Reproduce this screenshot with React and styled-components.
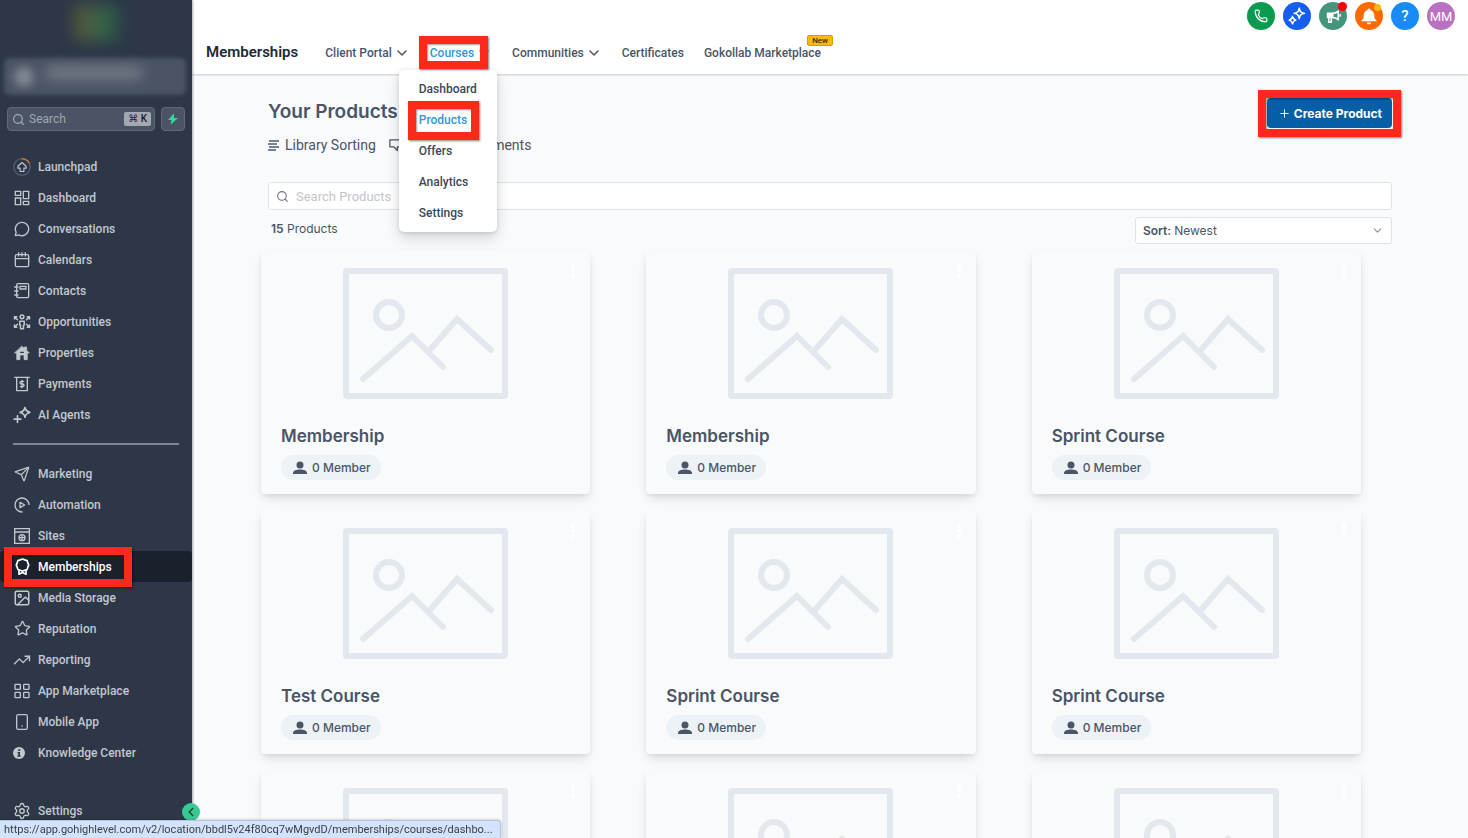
import styled, { createGlobalStyle, css } from 'styled-components';
import {
  ChevronDown,
  ChevronLeft,
  Image,
  MessageCircle,
  Phone,
  Search,
  Send,
  Settings,
  Star,
  TrendingUp,
} from 'lucide-react';

const Icon = ({ size = 16, width = 2, children }) => (
  <svg
    width={size}
    height={size}
    viewBox="0 0 24 24"
    fill="none"
    stroke="currentColor"
    strokeWidth={width}
    strokeLinecap="round"
    strokeLinejoin="round"
    aria-hidden="true"
  >
    {children}
  </svg>
);

const LaunchpadIcon = () => (
  <Icon size={18} width={1.5}>
    <circle cx="12" cy="12" r="11" stroke="#5b6678" />
    <path d="M12 1a11 11 0 0 1 9.5 5.5" stroke="#c8743f" strokeWidth="2" />
    <path d="M12 6l5.5 5v2.500h-3V18h-5v-4.500h-3V11z" />
  </Icon>
);

const DashboardIcon = () => (
  <Icon width={2}>
    <path d="M2 2h8v6H2zM14 2h8v11h-8zM2 12h8v10H2zM14 17h8v5h-8z" strokeLinejoin="miter" />
  </Icon>
);

const CalendarIcon = () => (
  <Icon width={2}>
    <rect x="2" y="4" width="20" height="18" rx="2" />
    <path d="M2 10h20M7 1v5M12 1v5M17 1v5" />
  </Icon>
);

const ContactsIcon = () => (
  <Icon width={2}>
    <rect x="4" y="1" width="18" height="21" rx="2" />
    <path d="M9 5h9v4H9zM1 6h5M1 12h5M1 18h5" />
  </Icon>
);

const OpportunitiesIcon = () => (
  <Icon size={18} width={2}>
    <circle cx="12" cy="5" r="2.500" />
    <path d="M9 11h6v5h-1v5h-4v-5H9z" />
    <path d="M2 8V5h3M2 5l4 4M22 8V5h-3M22 5l-4 4M2 16v3h3M2 19l4-4M22 16v3h-3M22 19l-4-4" />
  </Icon>
);

const PropertiesIcon = () => (
  <Icon width={1}>
    <path d="M12 2l3.500 3V3H19v5l4 4h-3v10h-5v-7H9v7H4V12H1z" fill="currentColor" />
    <path d="M10 11h4" stroke="#2d3748" strokeWidth="2" />
  </Icon>
);

const PaymentsIcon = () => (
  <Icon width={2}>
    <path d="M1 2h22M4 2v20h16V2" />
    <path d="M14.500 8H11a1.500 1.500 0 0 0 0 4h2a1.500 1.500 0 0 1 0 4H9.500M12 6.500v11" />
  </Icon>
);

const AgentsIcon = () => (
  <Icon size={18} width={2.2}>
    <path d="M16 2c.8 4 2 5.200 6.500 6.500C18 10 16.800 11 16 15c-.8-4-2-5-6.500-6.500C14 7.200 15.200 6 16 2z" />
    <path d="M6 13v9M1.500 17.500h9" />
  </Icon>
);

const AutomationIcon = () => (
  <Icon width={2}>
    <path d="M22.500 11A10.500 10.500 0 1 0 12 22.500" />
    <path d="M9 8l7 4-7 4z" />
  </Icon>
);

const SitesIcon = () => (
  <Icon width={2}>
    <path d="M1 1h22v22H1zM1 6h22" strokeLinejoin="miter" />
    <circle cx="12" cy="14.500" r="4.500" />
    <path d="M8 14.500h8M12 11v7" />
  </Icon>
);

const MembershipsIcon = () => (
  <Icon size={17} width={2.4}>
    <path d="M12 1.500l3.200 1.200 3.300 1 1 3.300 1.300 3-1.300 3-1 3.300-3.300 1L12 18.500l-3.200-1.200-3.300-1-1-3.300L3.200 10l1.300-3 1-3.300 3.300-1z" />
    <path d="M7 17.500V23l5-2.500 5 2.500v-5.500" />
  </Icon>
);

const AppsIcon = () => (
  <Icon width={2}>
    <rect x="1.500" y="2" width="8" height="7.500" rx="1" />
    <rect x="14.500" y="2" width="8" height="7.500" rx="1" />
    <rect x="1.500" y="14" width="8" height="8" rx="1" />
    <rect x="14.500" y="14" width="8" height="8" rx="1" />
  </Icon>
);

const MobileIcon = () => (
  <Icon width={2}>
    <rect x="4" y="1" width="16" height="22" rx="2.500" />
    <path d="M12 18h.1" strokeWidth="2.500" />
  </Icon>
);

const InfoIcon = () => (
  <svg width="12" height="12" viewBox="0 0 24 24" aria-hidden="true">
    <circle cx="12" cy="12" r="12" fill="currentColor" />
    <path d="M10.500 4.500h4v3.500h-4zM9 10h5v7h1.500v2.500H8.500V17h2v-4.500H9z" fill="#2d3748" />
  </svg>
);

const BoltIcon = () => (
  <svg width="12" height="12" viewBox="0 0 24 24" aria-hidden="true">
    <path d="M14 1L2 14h7l-1.500 9L22 10h-8z" fill="#38d9a0" />
  </svg>
);

const SparkleIcon = () => (
  <Icon size={18} width={2}>
    <path d="M15 1.500c1 5 2 6 7 7-5 1-6 2-7 7-1-5-2-6-7-7 5-1 6-2 7-7z" />
    <path d="M6 12.500c.7 3.500 1.500 4.200 4.500 5-3 .8-3.800 1.500-4.500 5-.7-3.500-1.500-4.200-4.500-5 3-.8 3.800-1.500 4.500-5z" />
  </Icon>
);

const MegaphoneIcon = () => (
  <Icon size={15} width={2.5}>
    <path d="M19.500 3v14.500M19.500 4c-3 2-6 3-9 3v6.500c3 0 6 1 9 3" />
    <path d="M2.500 7h8v6.500h-8z" fill="currentColor" />
    <path d="M4.500 14v7h4v-7" />
    <path d="M22.500 9v2.500" />
  </Icon>
);

const BellIcon = () => (
  <svg width="18" height="18" viewBox="0 0 24 24" aria-hidden="true">
    <path
      d="M12 2a2 2 0 0 1 2 2c3 1 5 3.500 5 7 0 4 .8 5 3 7v1H2v-1c2.200-2 3-3 3-7 0-3.500 2-6 5-7a2 2 0 0 1 2-2zM9 20.500h6a3 2.500 0 0 1-6 0z"
      fill="#fff"
    />
  </svg>
);

const UserIcon = () => (
  <svg width="14" height="14" viewBox="0 0 14 14" aria-hidden="true">
    <circle cx="7" cy="4" r="3.500" fill="#4a5568" />
    <path d="M0 13v-1C0 9.500 3.500 8.500 7 8.500s7 1 7 3.500v1z" fill="#4a5568" />
  </svg>
);

const SortIcon = () => (
  <svg width="11" height="11" viewBox="0 0 11 11" stroke="#4f5a70" strokeWidth="1.300" aria-hidden="true">
    <path d="M1 1h10M0 4h9M1 7h10M0 10h8" />
  </svg>
);

const CommentsIcon = () => (
  <Icon size={15} width={2}>
    <path d="M21 3H3v11h6l6 6v-6h6z" />
  </Icon>
);

const PlaceholderImage = () => (
  <svg width="165" height="131" viewBox="0 0 165 131" fill="none" stroke="#e3e8ee" aria-hidden="true">
    <rect x="3" y="3" width="159" height="125" rx="1" strokeWidth="6" />
    <circle cx="46" cy="47" r="13" strokeWidth="6" />
    <path
      d="M20 111L69 68L100 99M86 83L114 51L148 82"
      strokeWidth="6"
      strokeLinecap="round"
      strokeLinejoin="miter"
    />
  </svg>
);

const mainLinks = [
  { label: 'Launchpad', icon: <LaunchpadIcon /> },
  { label: 'Dashboard', icon: <DashboardIcon /> },
  { label: 'Conversations', icon: <MessageCircle size={16} strokeWidth={2} /> },
  { label: 'Calendars', icon: <CalendarIcon /> },
  { label: 'Contacts', icon: <ContactsIcon /> },
  { label: 'Opportunities', icon: <OpportunitiesIcon /> },
  { label: 'Properties', icon: <PropertiesIcon /> },
  { label: 'Payments', icon: <PaymentsIcon /> },
  { label: 'AI Agents', icon: <AgentsIcon /> },
];

const toolLinks = [
  { label: 'Marketing', icon: <Send size={16} strokeWidth={1.8} /> },
  { label: 'Automation', icon: <AutomationIcon /> },
  { label: 'Sites', icon: <SitesIcon /> },
  { label: 'Memberships', icon: <MembershipsIcon />, active: true },
  { label: 'Media Storage', icon: <Image size={18} strokeWidth={2} /> },
  { label: 'Reputation', icon: <Star size={17} strokeWidth={1.8} /> },
  { label: 'Reporting', icon: <TrendingUp size={18} strokeWidth={1.8} /> },
  { label: 'App Marketplace', icon: <AppsIcon /> },
  { label: 'Mobile App', icon: <MobileIcon /> },
  { label: 'Knowledge Center', icon: <InfoIcon />, flush: true },
];

const courseLinks = ['Dashboard', 'Products', 'Offers', 'Analytics', 'Settings'];

const products = [
  'Membership',
  'Membership',
  'Sprint Course',
  'Test Course',
  'Sprint Course',
  'Sprint Course',
  'Sprint Course',
  'Sprint Course',
  'Test Course',
];

const SideLink = ({ label, icon, active, flush }) => (
  <SideItem href="#" $active={active}>
    <SideIcon $flush={flush}>{icon}</SideIcon>
    {label}
    {active && <Marker $inset="-4px 60px -5px 4px" />}
  </SideItem>
);

const Sidebar = () => (
  <Aside>
    <Brand>
      <BrandGlow />
    </Brand>
    <Account>
      <AccountAvatar />
      <AccountName />
    </Account>
    <SearchRow>
      <QuickSearch>
        <Search size={13} strokeWidth={2.2} />
        <input type="text" placeholder="Search" aria-label="Search" />
        <kbd>⌘ K</kbd>
      </QuickSearch>
      <BoltButton type="button" aria-label="Quick actions">
        <BoltIcon />
      </BoltButton>
    </SearchRow>
    <SideNav>
      {mainLinks.map((link) => (
        <SideLink key={link.label} {...link} />
      ))}
      <Divider />
      {toolLinks.map((link) => (
        <SideLink key={link.label} {...link} />
      ))}
    </SideNav>
    <SideFooter>
      <SideLink label="Settings" icon={<Settings size={18} strokeWidth={1.8} />} />
    </SideFooter>
    <CollapseButton type="button" aria-label="Collapse sidebar">
      <ChevronLeft size={14} strokeWidth={3} />
    </CollapseButton>
  </Aside>
);

const Header = () => (
  <TopBar>
    <Actions>
      <RoundButton type="button" aria-label="Call" $color="#089b50">
        <Phone size={14} strokeWidth={2} />
      </RoundButton>
      <RoundButton type="button" aria-label="Assistant" $color="#155eef">
        <SparkleIcon />
      </RoundButton>
      <RoundButton type="button" aria-label="Announcements" $color="#43957c">
        <MegaphoneIcon />
        <Dot $color="#ff0000" />
      </RoundButton>
      <RoundButton type="button" aria-label="Notifications" $color="#ff6a00">
        <BellIcon />
        <Dot $color="#fdb813" $small />
      </RoundButton>
      <RoundButton type="button" aria-label="Help" $color="#188bf6">
        <b>?</b>
      </RoundButton>
      <RoundButton type="button" aria-label="Profile" $color="#b872c1">
        MM
      </RoundButton>
    </Actions>
    <NavRow>
      <h1>Memberships</h1>
      <NavItem>
        <button type="button">
          Client Portal <ChevronDown size={16} strokeWidth={2.2} />
        </button>
      </NavItem>
      <NavItem $active>
        <button type="button">
          Courses <ChevronDown size={16} strokeWidth={2.2} />
        </button>
        <Marker $inset="6px 4px 3px -11px" />
        <Dropdown>
          {courseLinks.map((label) => (
            <DropdownLink key={label} href="#" $active={label === 'Products'}>
              {label}
              {label === 'Products' && <Marker $inset="-4px 18px -4px 9px" />}
            </DropdownLink>
          ))}
        </Dropdown>
      </NavItem>
      <NavItem>
        <button type="button">
          Communities <ChevronDown size={16} strokeWidth={2.2} />
        </button>
      </NavItem>
      <NavItem>
        <a href="#">Certificates</a>
      </NavItem>
      <NavItem>
        <a href="#">Gokollab Marketplace</a>
        <NewBadge>New</NewBadge>
      </NavItem>
    </NavRow>
  </TopBar>
);

const ProductCard = ({ title }) => (
  <Card>
    <MenuButton type="button" aria-label="Product options">
      <i />
      <i />
      <i />
    </MenuButton>
    <PlaceholderImage />
    <CardBody>
      <h3>{title}</h3>
      <Members>
        <UserIcon />0 Member
      </Members>
    </CardBody>
  </Card>
);

const App = () => {
  return (
    <>
      <GlobalStyle />
      <Layout>
        <Sidebar />
        <Main>
          <Header />
          <Content>
            <PageHead>
              <div>
                <h2>Your Products</h2>
                <PageLinks>
                  <a href="#">
                    <SortIcon />
                    Library Sorting
                  </a>
                  <a href="#">
                    <CommentsIcon />
                    Manage Comments
                  </a>
                </PageLinks>
              </div>
              <CreateButton type="button">
                <Icon size={9} width={2.5}>
                  <path d="M12 2v20M2 12h20" />
                </Icon>
                Create Product
                <Marker $inset="-8px -9px -9px" />
              </CreateButton>
            </PageHead>
            <ProductSearch>
              <Search size={13} strokeWidth={2} />
              <input type="text" placeholder="Search Products" aria-label="Search Products" />
            </ProductSearch>
            <ListHead>
              <p>
                <b>15</b> Products
              </p>
              <SortBox>
                <label htmlFor="sort">Sort:</label>
                <select id="sort" defaultValue="newest">
                  <option value="newest">Newest</option>
                  <option value="oldest">Oldest</option>
                </select>
                <ChevronDown size={13} strokeWidth={2} />
              </SortBox>
            </ListHead>
          </Content>
          <Grid>
            {products.map((title, index) => (
              <ProductCard key={index} title={title} />
            ))}
          </Grid>
        </Main>
      </Layout>
      <StatusBar>
        https://app.gohighlevel.com/v2/location/bbdl5v24f80cq7wMgvdD/memberships/courses/dashbo...
      </StatusBar>
    </>
  );
};

export default App;

const GlobalStyle = createGlobalStyle`
  *, *::before, *::after {
    box-sizing: border-box;
  }
  body {
    margin: 0;
    overflow: hidden;
    font-family: Roboto, 'Liberation Sans', sans-serif;
    font-size: 12px;
    color: #4a5568;
    background: #f9fafc;
  }
  h1, h2, h3, p {
    margin: 0;
  }
  a {
    color: inherit;
    text-decoration: none;
  }
  button, input, select {
    font: inherit;
    color: inherit;
    border: 0;
    padding: 0;
    background: none;
    outline: none;
  }
  svg {
    flex-shrink: 0;
  }
`;

const Layout = styled.div`
  display: flex;
  height: 100vh;
`;

const Marker = styled.span`
  position: absolute;
  inset: ${({ $inset }) => $inset};
  border: 8px solid #fd2a1b;
  box-shadow: 1px 1px 2px rgba(0, 0, 0, 0.5), inset 1px 1px 2px rgba(0, 0, 0, 0.4);
  pointer-events: none;
  z-index: 4;
`;

const Aside = styled.aside`
  position: relative;
  flex: 0 0 192px;
  min-width: 0;
  display: flex;
  flex-direction: column;
  background: #2d3748;
  color: #c3c7ce;
  box-shadow: 1px 0 2px rgba(45, 55, 72, 0.4);
  z-index: 3;
`;

const Brand = styled.div`
  display: flex;
  justify-content: center;
  height: 58px;
  overflow: hidden;
`;

const BrandGlow = styled.div`
  width: 44px;
  height: 36px;
  margin-top: 5px;
  background: linear-gradient(90deg, #5a5636, #3f6248 50%, #285c48);
  filter: blur(8px);
`;

const Account = styled.div`
  display: flex;
  align-items: center;
  gap: 12px;
  height: 37px;
  margin: 0 6px 12px 4px;
  padding: 0 10px;
  border-radius: 6px;
  background: #4a5464;
  filter: blur(2px);
`;

const AccountAvatar = styled.div`
  width: 20px;
  height: 20px;
  border-radius: 50%;
  background: #858a95;
  filter: blur(4px);
`;

const AccountName = styled.div`
  flex: 0 1 96px;
  height: 14px;
  margin-bottom: 8px;
  background: #717885;
  filter: blur(6px);
`;

const SearchRow = styled.div`
  display: flex;
  gap: 6px;
  padding: 0 7px;
  margin-bottom: 20px;
`;

const QuickSearch = styled.div`
  flex: 1;
  min-width: 0;
  display: flex;
  align-items: center;
  gap: 4px;
  height: 24px;
  padding: 0 3px 0 4px;
  border: 1px solid #5f6978;
  border-radius: 4px;
  background: #4a5464;
  color: #a7adb7;
  input {
    flex: 1;
    min-width: 0;
  }
  input::placeholder {
    color: #a0a7b2;
  }
  kbd {
    padding: 0 4px;
    border-radius: 2px;
    background: #a3a9b3;
    color: #1a202c;
    font-family: Roboto, 'DejaVu Sans', sans-serif;
    font-size: 10px;
    font-weight: 500;
    line-height: 14px;
  }
`;

const BoltButton = styled.button`
  flex-shrink: 0;
  display: flex;
  align-items: center;
  justify-content: center;
  width: 24px;
  height: 24px;
  border: 1px solid #5f6978;
  border-radius: 4px;
  background: #4a5464;
`;

const SideNav = styled.nav`
  display: flex;
  flex-direction: column;
`;

const SideItem = styled.a`
  position: relative;
  display: flex;
  align-items: center;
  gap: 7px;
  height: 31px;
  padding-left: 13px;
  border-radius: 4px;
  font-weight: 500;
  ${({ $active }) =>
    $active &&
    css`
      background: #1a202c;
      color: #fff;
    `}
`;

const SideIcon = styled.span`
  display: flex;
  align-items: center;
  justify-content: ${({ $flush }) => ($flush ? 'flex-start' : 'center')};
  width: 18px;
`;

const Divider = styled.hr`
  width: auto;
  height: 2px;
  margin: 13px;
  border: 0;
  background: #7d8796;
`;

const SideFooter = styled.div`
  margin-top: auto;
  padding-bottom: 12px;
`;

const CollapseButton = styled.button`
  position: absolute;
  right: -8px;
  bottom: 17px;
  display: flex;
  align-items: center;
  justify-content: center;
  width: 18px;
  height: 18px;
  border-radius: 50%;
  background: #37ca95;
  color: #14532d;
`;

const Main = styled.main`
  flex: 1;
  min-width: 0;
  display: flex;
  flex-direction: column;
  overflow: hidden;
`;

const TopBar = styled.header`
  position: relative;
  flex-shrink: 0;
  padding: 2px 13px 0 14px;
  background: #fff;
  box-shadow: 0 1px 2px rgba(0, 0, 0, 0.2);
  z-index: 2;
`;

const Actions = styled.div`
  display: flex;
  justify-content: flex-end;
  gap: 8px;
`;

const RoundButton = styled.button`
  position: relative;
  display: flex;
  align-items: center;
  justify-content: center;
  width: 28px;
  height: 28px;
  border-radius: 50%;
  background: ${({ $color }) => $color};
  color: #fff;
  font-size: 13px;
  b {
    font-size: 15px;
    font-weight: 500;
  }
`;

const Dot = styled.span`
  position: absolute;
  top: ${({ $small }) => ($small ? '2px' : '0')};
  right: ${({ $small }) => ($small ? '2px' : '0')};
  width: ${({ $small }) => ($small ? '7px' : '9px')};
  height: ${({ $small }) => ($small ? '7px' : '9px')};
  border-radius: 50%;
  background: ${({ $color }) => $color};
`;

const NavRow = styled.nav`
  display: flex;
  align-items: center;
  gap: 20px;
  height: 44px;
  h1 {
    margin-right: 7px;
    color: #1f2937;
    font-size: 15px;
    font-weight: 600;
  }
`;

const NavItem = styled.div`
  position: relative;
  display: flex;
  align-items: center;
  height: 100%;
  font-weight: 500;
  color: ${({ $active }) => ($active ? '#2f97d8' : '#4a5568')};
  border-bottom: 2px solid ${({ $active }) => ($active ? '#2f97d8' : 'transparent')};
  padding-top: 4px;
  button {
    display: flex;
    align-items: center;
    gap: 2px;
  }
`;

const NewBadge = styled.span`
  position: absolute;
  top: 5px;
  right: -12px;
  padding: 0 4px;
  border: 1px solid #d69e00;
  border-radius: 2px;
  background: #fbb909;
  color: #3b2f00;
  font-size: 8px;
  line-height: 9px;
`;

const Dropdown = styled.div`
  position: absolute;
  top: 40px;
  left: -31px;
  display: flex;
  flex-direction: column;
  padding: 4px 0 3px;
  border-radius: 5px;
  background: #fff;
  box-shadow: 0 6px 14px rgba(0, 0, 0, 0.15), 0 1px 4px rgba(0, 0, 0, 0.12);
`;

const DropdownLink = styled.a`
  position: relative;
  padding: 0 20px;
  line-height: 31px;
  color: ${({ $active }) => ($active ? '#2f97d8' : '#3d4759')};
`;

const Content = styled.section`
  padding: 24px 76px 6px;
`;

const PageHead = styled.div`
  display: flex;
  align-items: flex-start;
  justify-content: space-between;
  margin-bottom: 27px;
  h2 {
    font-family: Inter, sans-serif;
    font-size: 19px;
    font-weight: 600;
    line-height: 28px;
  }
`;

const PageLinks = styled.div`
  display: flex;
  gap: 12px;
  margin-top: 9px;
  font-size: 14px;
  line-height: 20px;
  a {
    display: flex;
    align-items: center;
    gap: 6px;
  }
`;

const CreateButton = styled.button`
  position: relative;
  display: flex;
  align-items: center;
  gap: 5px;
  height: 30px;
  padding: 0 10px 0 13px;
  border-radius: 4px;
  background: #045fa7;
  color: #fff;
  font-family: Inter, sans-serif;
  font-weight: 700;
`;

const box = css`
  display: flex;
  align-items: center;
  border: 1px solid #e0e2e8;
  border-radius: 3px;
  background: #fff;
`;

const ProductSearch = styled.div`
  ${box}
  gap: 7px;
  height: 28px;
  padding: 0 7px;
  color: #6b7486;
  font-size: 13px;
  input {
    flex: 1;
  }
  input::placeholder {
    color: #c2c6ce;
  }
`;

const ListHead = styled.div`
  display: flex;
  justify-content: space-between;
  margin-top: 7px;
  p {
    padding-left: 3px;
    font-family: Inter, sans-serif;
    line-height: 24px;
  }
  b {
    font-weight: 600;
  }
`;

const SortBox = styled.div`
  ${box}
  gap: 3px;
  width: 257px;
  height: 27px;
  padding: 0 7px;
  font-family: Inter, sans-serif;
  label {
    font-weight: 600;
  }
  select {
    flex: 1;
    appearance: none;
  }
  svg {
    color: #8a92a1;
  }
`;

const Grid = styled.section`
  display: grid;
  grid-template-columns: repeat(3, 1fr);
  gap: 16px 56px;
  padding: 0 107px 0 69px;
`;

const Card = styled.article`
  position: relative;
  display: flex;
  flex-direction: column;
  align-items: center;
  padding-top: 18px;
  border-radius: 4px;
  background: #f9fafc;
  box-shadow: 0 6px 12px -2px rgba(0, 0, 0, 0.12), 0 2px 4px -1px rgba(0, 0, 0, 0.08);
`;

const MenuButton = styled.button`
  position: absolute;
  top: 14px;
  right: 15px;
  display: flex;
  flex-direction: column;
  gap: 1px;
  i {
    width: 4px;
    height: 4px;
    border-radius: 50%;
    background: #fff;
  }
`;

const CardBody = styled.div`
  align-self: stretch;
  padding: 25px 20px 14px;
  h3 {
    font-family: Inter, sans-serif;
    font-size: 17px;
    font-weight: 600;
    line-height: 24px;
  }
`;

const Members = styled.span`
  display: flex;
  align-items: center;
  gap: 5px;
  width: fit-content;
  height: 25px;
  margin-top: 7px;
  padding: 0 10px 0 12px;
  border-radius: 13px;
  background: #edf2f7;
  font-family: Inter, sans-serif;
  font-weight: 500;
`;

const StatusBar = styled.div`
  position: fixed;
  left: 0;
  bottom: 0;
  padding: 0 7px 0 4px;
  border: 1px solid #b9c4d8;
  border-width: 1px 1px 0 0;
  border-top-right-radius: 4px;
  background: #d3e3fd;
  color: #3c4043;
  font-size: 11px;
  line-height: 17px;
  box-shadow: 0 0 3px rgba(0, 0, 0, 0.3);
  z-index: 5;
`;
